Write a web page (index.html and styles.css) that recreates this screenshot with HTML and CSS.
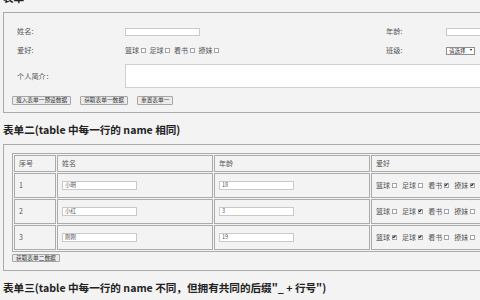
FILE: index.html
```html
<!DOCTYPE html>
<html lang="zh-CN">
<head>
<meta charset="utf-8">
<title>表单</title>
<link rel="stylesheet" href="styles.css">
</head>
<body>
<h3 class="title title-first">表单</h3>
<fieldset class="box box-one">
  <div class="form-grid">
    <label class="lbl" for="name">姓名:</label>
    <div class="field"><input id="name" class="txt" type="text"></div>
    <label class="lbl" for="age">年龄:</label>
    <div class="field"><input id="age" class="txt" type="text"></div>

    <span class="lbl">爱好:</span>
    <div class="field hobbies">
      <label class="hob">篮球<input type="checkbox" class="cb"></label>
      <label class="hob">足球<input type="checkbox" class="cb"></label>
      <label class="hob">看书<input type="checkbox" class="cb"></label>
      <label class="hob">撩妹<input type="checkbox" class="cb"></label>
    </div>
    <label class="lbl" for="cls">班级:</label>
    <div class="field">
      <span class="sel"><select id="cls"><option>请选择</option><option>一班</option><option>二班</option></select><span class="arrow"></span></span>
    </div>

    <label class="lbl" for="intro">个人简介：</label>
    <div class="field wide"><textarea id="intro"></textarea></div>
  </div>
  <div class="btns">
    <button type="button" class="btn">载入表单一预设数据</button>
    <button type="button" class="btn">获取表单一数据</button>
    <button type="button" class="btn">重置表单一</button>
  </div>
</fieldset>

<h3 class="title">表单二(table 中每一行的 name 相同)</h3>
<fieldset class="box box-two">
  <table class="grid">
    <tr class="head">
      <td class="c1">序号</td>
      <td class="c2">姓名</td>
      <td class="c3">年龄</td>
      <td class="c4">爱好</td>
    </tr>
    <tr class="row">
      <td>1</td>
      <td><input class="cell-input" type="text" name="name" value="小明"></td>
      <td><input class="cell-input" type="text" name="age" value="18"></td>
      <td>
        <label class="hob">篮球<input type="checkbox" class="cb" name="hobby"></label>
        <label class="hob">足球<input type="checkbox" class="cb" name="hobby"></label>
        <label class="hob">看书<input type="checkbox" class="cb" name="hobby" checked></label>
        <label class="hob">撩妹<input type="checkbox" class="cb" name="hobby" checked></label>
      </td>
    </tr>
    <tr class="row">
      <td>2</td>
      <td><input class="cell-input" type="text" name="name" value="小红"></td>
      <td><input class="cell-input" type="text" name="age" value="3"></td>
      <td>
        <label class="hob">篮球<input type="checkbox" class="cb" name="hobby"></label>
        <label class="hob">足球<input type="checkbox" class="cb" name="hobby" checked></label>
        <label class="hob">看书<input type="checkbox" class="cb" name="hobby"></label>
        <label class="hob">撩妹<input type="checkbox" class="cb" name="hobby"></label>
      </td>
    </tr>
    <tr class="row">
      <td>3</td>
      <td><input class="cell-input" type="text" name="name" value="刚刚"></td>
      <td><input class="cell-input" type="text" name="age" value="19"></td>
      <td>
        <label class="hob">篮球<input type="checkbox" class="cb" name="hobby" checked></label>
        <label class="hob">足球<input type="checkbox" class="cb" name="hobby" checked></label>
        <label class="hob">看书<input type="checkbox" class="cb" name="hobby"></label>
        <label class="hob">撩妹<input type="checkbox" class="cb" name="hobby"></label>
      </td>
    </tr>
  </table>
  <div class="btns btns-two">
    <button type="button" class="btn">获取表单二数据</button>
  </div>
</fieldset>

<h3 class="title">表单三(table 中每一行的 name 不同，但拥有共同的后缀"_ + 行号")</h3>
</body>
</html>
```

FILE: styles.css
```css
html, body {
  overflow: hidden;
}
html {
  background: #f3f3f3;
}
body {
  margin: 0;
  padding: 0 0 0 3px;
  background: #f3f3f3;
  color: #555;
  font-family: "Noto Sans CJK SC", "Noto Sans", sans-serif;
  font-size: 7px;
  line-height: 1.2;
}

.title {
  margin: 10px 0 7px;
  font-size: 10.6px;
  line-height: 14px;
  font-weight: bold;
  color: #222;
  white-space: nowrap;
}
.title-first {
  margin-top: -9px;
}

.box {
  margin: 0;
  min-width: 0;
  width: 600px;
  box-sizing: border-box;
  border: 1px solid #ababab;
}
.box-one {
  padding: 13px 8px 7px;
}
.box-two {
  padding: 8px 8px 8px;
}

.form-grid {
  display: grid;
  grid-template-columns: 108px 261px 60px 1fr;
  grid-template-rows: 11px 11px 24px;
  row-gap: 8px;
  margin-left: 5px;
  align-items: center;
}
.lbl {
  font-size: 7.2px;
  color: #555;
  white-space: nowrap;
}
.field {
  display: flex;
  align-items: center;
}
.wide {
  grid-column: 2 / -1;
  align-self: stretch;
}

.txt {
  width: 75px;
  height: 8px;
  box-sizing: border-box;
  margin: 0;
  padding: 0 2px;
  border: 1px solid #c9c9c9;
  background: #fff;
  font: inherit;
  font-size: 5.5px;
}
textarea {
  display: block;
  width: 420px;
  height: 24px;
  box-sizing: border-box;
  margin: 0;
  border: 1px solid #cfcfcf;
  background: #fff;
  resize: none;
  font: inherit;
}

.hobbies {
  white-space: nowrap;
}
.hob {
  display: inline-flex;
  align-items: center;
  margin-right: 4px;
  font-size: 7px;
  color: #555;
  white-space: nowrap;
}
.cb {
  appearance: none;
  -webkit-appearance: none;
  display: inline-block;
  width: 5px;
  height: 5px;
  box-sizing: border-box;
  margin: 0 0 0 1.5px;
  border: 1px solid #a4a4a4;
  background: #fff;
}
.cb:checked::after {
  content: "";
  display: block;
  width: 1.2px;
  height: 2.2px;
  margin: -0.2px auto 0;
  border: solid #222;
  border-width: 0 0.8px 0.8px 0;
  transform: rotate(40deg);
}

.sel {
  display: inline-flex;
  align-items: center;
  width: 29px;
  height: 8px;
  box-sizing: border-box;
  border: 1px solid #8f8f8f;
  background: #fff;
}
.sel select {
  appearance: none;
  -webkit-appearance: none;
  width: 22px;
  height: 6px;
  margin: 0;
  padding: 0 0 0 2px;
  border: 0;
  background: transparent;
  color: #333;
  font: inherit;
  font-size: 5.5px;
  line-height: 6px;
  outline: none;
}
.arrow {
  width: 0;
  height: 0;
  margin: 0 2px 1px auto;
  border-left: 1.6px solid transparent;
  border-right: 1.6px solid transparent;
  border-top: 2.2px solid #111;
}

.btns {
  display: flex;
  gap: 9px;
  margin-top: 8px;
}
.btns-two {
  margin-top: 2px;
}
.btn {
  height: 8.6px;
  box-sizing: border-box;
  margin: 0;
  padding: 0 3px;
  border: 1px solid #a6a6a6;
  border-radius: 1px;
  background: #ebebeb;
  color: #333;
  font: inherit;
  font-size: 5.7px;
  line-height: 6px;
  white-space: nowrap;
}

.grid {
  table-layout: fixed;
  width: 511px;
  border: 1px solid #ababab;
  border-spacing: 1px;
  margin: 0;
}
.grid td {
  box-sizing: border-box;
  border: 1px solid #ababab;
  padding: 0 4px;
  color: #555;
  font-size: 7px;
  white-space: nowrap;
  vertical-align: middle;
}
.grid .c1 { width: 42px; }
.grid .c2 { width: 156px; }
.grid .c3 { width: 156px; }
.grid .c4 { width: 150px; }
.grid .head td {
  height: 17px;
}
.grid .row td {
  height: 25px;
}
.cell-input {
  display: block;
  width: 75px;
  height: 9px;
  box-sizing: border-box;
  margin: 0;
  padding: 0 2px;
  border: 1px solid #c9c9c9;
  background: #fff;
  color: #555;
  font: inherit;
  font-size: 5.5px;
}
```
